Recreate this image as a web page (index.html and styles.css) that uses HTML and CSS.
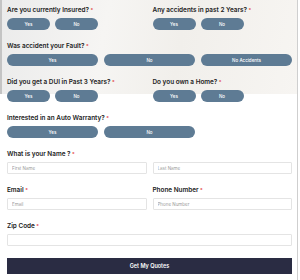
FILE: index.html
```html
<!DOCTYPE html>
<html lang="en">
<head>
    <meta charset="UTF-8">
    <meta name="viewport" content="width=device-width, initial-scale=1.0">
    <title>Get My Quotes</title>
    <link rel="stylesheet" href="styles.css">
</head>
<body>
    <div class="page">
        <form class="quote-form">
            <!-- Insurance questions -->
            <div class="grid two">
                <div class="field">
                    <label>Are you currently Insured?<span class="req">*</span></label>
                    <div class="opts">
                        <button type="button" class="opt">Yes</button>
                        <button type="button" class="opt">No</button>
                    </div>
                </div>
                <div class="field">
                    <label>Any accidents in past 2 Years?<span class="req">*</span></label>
                    <div class="opts">
                        <button type="button" class="opt">Yes</button>
                        <button type="button" class="opt">No</button>
                    </div>
                </div>
            </div>

            <div class="field">
                <label>Was accident your Fault?<span class="req">*</span></label>
                <div class="grid three">
                    <button type="button" class="opt wide">Yes</button>
                    <button type="button" class="opt wide">No</button>
                    <button type="button" class="opt wide">No Accidents</button>
                </div>
            </div>

            <div class="grid two">
                <div class="field">
                    <label>Did you get a DUI in Past 3 Years?<span class="req">*</span></label>
                    <div class="opts">
                        <button type="button" class="opt">Yes</button>
                        <button type="button" class="opt">No</button>
                    </div>
                </div>
                <div class="field">
                    <label>Do you own a Home?<span class="req">*</span></label>
                    <div class="opts">
                        <button type="button" class="opt">Yes</button>
                        <button type="button" class="opt">No</button>
                    </div>
                </div>
            </div>

            <div class="field">
                <label>Interested in an Auto Warranty?<span class="req">*</span></label>
                <div class="grid three">
                    <button type="button" class="opt wide">Yes</button>
                    <button type="button" class="opt wide">No</button>
                </div>
            </div>

            <!-- Contact details -->
            <div class="field">
                <label>What is your Name ?<span class="req">*</span></label>
                <div class="grid two">
                    <input type="text" placeholder="First Name">
                    <input type="text" placeholder="Last Name">
                </div>
            </div>

            <div class="grid two">
                <div class="field">
                    <label>Email<span class="req">*</span></label>
                    <input type="email" placeholder="Email">
                </div>
                <div class="field">
                    <label>Phone Number<span class="req">*</span></label>
                    <input type="tel" placeholder="Phone Number">
                </div>
            </div>

            <div class="field">
                <label>Zip Code<span class="req">*</span></label>
                <input type="text">
            </div>

            <button type="submit" class="submit">Get My Quotes</button>
        </form>
    </div>
</body>
</html>
```

FILE: styles.css
```css
body {
    margin: 0;
    padding: 0;
    background-color: #fff;
    font-family: Inter, "Open Sans", sans-serif;
    color: #222;
}
.page {
    width: 285px;
    height: 280px;
    padding: 6px 5px 0 7px;
    box-sizing: content-box;
    border-right: 1px solid #cfcfcf;
    background:
        linear-gradient(to right, #c4c4c4 0, #c4c4c4 2px, transparent 2px),
        linear-gradient(100deg, #ebebeb 0%, #f6f5f3 35%, #f1efeb 60%, #f7f5f2 100%);
    background-size: 100% 94px;
    background-repeat: no-repeat;
}
.grid {
    display: grid;
}
.grid.two {
    grid-template-columns: 1fr 1fr;
    column-gap: 6px;
}
.grid.three {
    grid-template-columns: 1fr 1fr 1fr;
    column-gap: 6px;
}
.field {
    margin-bottom: 12px;
}
label {
    display: block;
    font-size: 6.4px;
    font-weight: 600;
    line-height: 8px;
    height: 8px;
    margin-bottom: 4px;
    white-space: nowrap;
}
.req {
    color: #e23b3b;
    margin-left: 1.5px;
    font-size: 5px;
}
.opts {
    display: flex;
    gap: 5px;
}
.opt {
    width: 43px;
    height: 12px;
    padding: 0;
    border: none;
    border-radius: 6px;
    background-color: #5e7b94;
    color: #fff;
    font-family: inherit;
    font-size: 4.5px;
    font-weight: 500;
    cursor: pointer;
}
.opt.wide {
    width: 100%;
}
input {
    display: block;
    width: 100%;
    height: 12px;
    box-sizing: border-box;
    border: 1px solid #e4e4e4;
    border-radius: 1px;
    padding: 0 4px;
    font-family: inherit;
    font-size: 4.5px;
    background: #fff;
}
input::placeholder {
    color: #9a9a9a;
}
.submit {
    display: block;
    width: 100%;
    height: 16px;
    margin-top: 2px;
    border: none;
    background-color: #2a2c43;
    color: #fff;
    font-family: inherit;
    font-size: 5.5px;
    font-weight: 600;
    cursor: pointer;
}
```
